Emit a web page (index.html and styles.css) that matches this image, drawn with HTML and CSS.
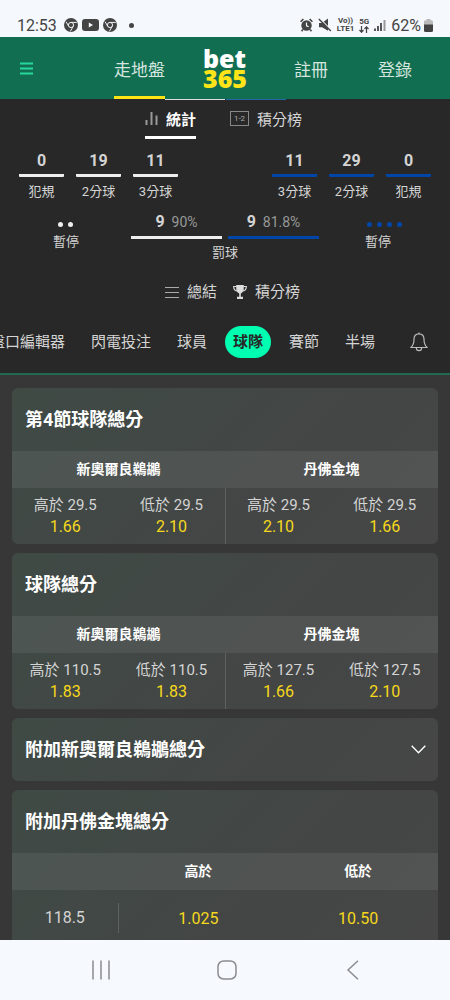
FILE: index.html
```
<!DOCTYPE html>
<html lang="zh-Hant">
<head>
    <meta charset="UTF-8">
    <meta name="viewport" content="width=device-width, initial-scale=1.0">
    <title>bet365</title>
    <link rel="stylesheet" href="styles.css">
</head>
<body>
    <div class="status-bar">
        <span class="clock">12:53</span>
        <svg width="14" height="14" viewBox="0 0 14 14"><circle cx="7" cy="7" r="7" fill="#444"/><circle cx="7" cy="7" r="2.6" fill="none" stroke="#eef1f6" stroke-width="1"/><path d="M7 4.4h5.8M4.8 8.4L2 3.6M9.2 8.4L6.3 13.4" stroke="#eef1f6" stroke-width="1" fill="none"/></svg>
        <svg width="17" height="12" viewBox="0 0 17 12"><rect width="17" height="12" rx="3" fill="#444"/><path d="M6.8 3.6v4.8L11 6z" fill="#f5f8fd"/></svg>
        <svg width="14" height="14" viewBox="0 0 14 14"><circle cx="7" cy="7" r="7" fill="#444"/><circle cx="7" cy="7" r="2.6" fill="none" stroke="#eef1f6" stroke-width="1"/><path d="M7 4.4h5.8M4.8 8.4L2 3.6M9.2 8.4L6.3 13.4" stroke="#eef1f6" stroke-width="1" fill="none"/></svg>
        <span class="more-dot"></span>
        <div class="status-right">
            <svg width="13" height="14" viewBox="0 0 13 14"><circle cx="6.5" cy="7.5" r="5.2" fill="#444"/><path d="M6.5 4.4v3.4l2.2 1" fill="none" stroke="#f5f8fd" stroke-width="1.2"/><path d="M.6 3.8L3.4 1M12.4 3.8L9.600 1M2.800 11.600l-1.200 1.600M10.200 11.600l1.200 1.600" stroke="#444" stroke-width="1.6"/></svg>
            <svg width="14" height="14" viewBox="0 0 14 14"><path d="M1 5h3l6-4.4v12.2L4 9.200H1z" fill="#444"/><path d="M1.600 .4l12 12" stroke="#f5f8fd" stroke-width="1.300"/><path d="M.8 1l12 12" stroke="#444" stroke-width="1.4"/></svg>
            <span class="net"><span>Vo))</span><span>LTE1</span></span>
            <span class="net"><span>5G</span><svg width="10" height="7" viewBox="0 0 10 7"><path d="M2.500 0v6M.5 4l2 2.2L4.500 4M7.500 7V1M5.500 3l2-2.200L9.500 3" fill="none" stroke="#444" stroke-width="1.200"/></svg></span>
            <svg width="12" height="12" viewBox="0 0 12 12"><path d="M1 12V9.500M4 12V7M7 12V4" stroke="#555" stroke-width="2"/><path d="M10.500 12V1" stroke="#999" stroke-width="2"/></svg>
            <div class="battery">
                62%
                <svg width="9" height="13" viewBox="0 0 9 13"><path d="M2.500 0h4v1.300h1A1.500 1.500 0 0 1 9 2.800V6H0V2.800a1.500 1.500 0 0 1 1.500-1.500h1z" fill="#bbb"/><path d="M0 5.500h9v6A1.500 1.500 0 0 1 7.500 13h-6A1.500 1.500 0 0 1 0 11.500z" fill="#444"/></svg>
            </div>
        </div>
    </div>

    <header class="header">
        <button class="menu-btn" aria-label="選單">
            <svg width="13" height="13" viewBox="0 0 13 13"><path d="M0 1.500h13M0 6.500h13M0 11.500h13" stroke="#26d79b" stroke-width="2"/></svg>
        </button>
        <a class="header-link active" href="#">走地盤</a>
        <a class="logo" href="#"><span>bet</span><span class="logo-num">365</span></a>
        <a class="header-link" href="#">註冊</a>
        <a class="header-link" href="#">登錄</a>
    </header>

    <section class="stats">
        <div class="team-strip"><i></i><i class="away"></i></div>
        <nav class="stats-tabs">
            <a class="stats-tab active" href="#">
                <svg width="13" height="13" viewBox="0 0 13 13"><path d="M1.500 8v5M6.500 0v13M11.500 3.500V13" stroke="#999" stroke-width="2"/></svg>
                統計
            </a>
            <a class="stats-tab" href="#">
                <span class="score-icon">1-2</span>
                積分榜
            </a>
        </nav>
        <div class="stat-row">
            <div class="stat"><b>0</b><span>犯規</span></div>
            <div class="stat"><b>19</b><span>2分球</span></div>
            <div class="stat"><b>11</b><span>3分球</span></div>
            <div class="stat away first"><b>11</b><span>3分球</span></div>
            <div class="stat away"><b>29</b><span>2分球</span></div>
            <div class="stat away"><b>0</b><span>犯規</span></div>
        </div>
        <div class="foul-row">
            <div class="timeout">
                <div class="dots"><i></i><i></i></div>
                暫停
            </div>
            <div class="free-throw">
                <div class="bars">
                    <div class="bar"><b>9</b><span>90%</span></div>
                    <div class="bar away"><b>9</b><span>81.8%</span></div>
                </div>
                罰球
            </div>
            <div class="timeout away">
                <div class="dots"><i></i><i></i><i></i><i></i></div>
                暫停
            </div>
        </div>
        <nav class="summary-links">
            <a href="#">
                <svg width="14" height="13" viewBox="0 0 14 13"><path d="M0 1.500h14M0 6.500h14M0 11.500h14" stroke="#aaa"/></svg>
                總結
            </a>
            <a href="#">
                <svg width="14" height="14" viewBox="0 0 14 14"><path d="M3.200 0h7.600v3.500c0 2.800-1.300 4.300-3 5v3.300h2.200V14H4v-2.200h2.200V8.500c-1.700-.7-3-2.200-3-5z" fill="#ddd"/><path d="M3.500 1.500H.7c0 2.600 1 4 3.300 4.500M10.500 1.500h2.800c0 2.600-1 4-3.300 4.500" fill="none" stroke="#ddd" stroke-width="1.200"/></svg>
                積分榜
            </a>
        </nav>
    </section>

    <div class="market-nav">
        <nav class="market-tabs">
            <a href="#">盤口編輯器</a>
            <a href="#">閃電投注</a>
            <a href="#">球員</a>
            <a class="active" href="#">球隊</a>
            <a href="#">賽節</a>
            <a href="#">半場</a>
        </nav>
        <button class="bell-btn" aria-label="通知">
            <svg width="18" height="20" viewBox="0 0 18 20"><path d="M9 1.800c-3.400 0-5 2.500-5 5.400 0 4.500-1.200 6.600-3.200 8.300h16.400c-2-1.700-3.200-3.800-3.200-8.300 0-2.900-1.600-5.400-5-5.400zM9 1.800V.5M6.300 15.700c0 1.900 1.200 2.900 2.700 2.900s2.700-1 2.700-2.900" fill="none" stroke="#bbb" stroke-width="1.200" stroke-linejoin="round"/></svg>
        </button>
    </div>

    <main class="markets">
        <section class="card">
            <h2>第4節球隊總分</h2>
            <table class="teams">
                <thead>
                    <tr><th colspan="2">新奧爾良鵜鶘</th><th colspan="2">丹佛金塊</th></tr>
                </thead>
                <tbody>
                    <tr>
                        <td>高於 29.5<b>1.66</b></td>
                        <td>低於 29.5<b>2.10</b></td>
                        <td>高於 29.5<b>2.10</b></td>
                        <td>低於 29.5<b>1.66</b></td>
                    </tr>
                </tbody>
            </table>
        </section>

        <section class="card">
            <h2>球隊總分</h2>
            <table class="teams">
                <thead>
                    <tr><th colspan="2">新奧爾良鵜鶘</th><th colspan="2">丹佛金塊</th></tr>
                </thead>
                <tbody>
                    <tr>
                        <td>高於 110.5<b>1.83</b></td>
                        <td>低於 110.5<b>1.83</b></td>
                        <td>高於 127.5<b>1.66</b></td>
                        <td>低於 127.5<b>2.10</b></td>
                    </tr>
                </tbody>
            </table>
        </section>

        <section class="card closed">
            <h2>附加新奧爾良鵜鶘總分</h2>
            <svg width="15" height="9" viewBox="0 0 15 9"><path d="M.7.8l6.800 7 6.800-7" fill="none" stroke="#fff" stroke-width="1.400"/></svg>
        </section>

        <section class="card">
            <h2>附加丹佛金塊總分</h2>
            <table class="lines">
                <thead>
                    <tr><th class="line-col"></th><th>高於</th><th>低於</th></tr>
                </thead>
                <tbody>
                    <tr><td class="line-col"><span>118.5</span></td><td><b>1.025</b></td><td><b>10.50</b></td></tr>
                </tbody>
            </table>
        </section>
    </main>

    <div class="system-nav">
        <button aria-label="最近使用"><svg width="20" height="20" viewBox="0 0 20 20"><path d="M2 .5v19M10 .5v19M18 .5v19" stroke="#8a8c90" stroke-width="1.500"/></svg></button>
        <button aria-label="首頁"><svg width="20" height="20" viewBox="0 0 20 20"><rect x="1" y="1" width="18" height="18" rx="5.500" fill="none" stroke="#8a8c90" stroke-width="1.500"/></svg></button>
        <button aria-label="返回"><svg width="20" height="20" viewBox="0 0 20 20"><path d="M15 .8L5 10l10 9.200" fill="none" stroke="#8a8c90" stroke-width="1.500"/></svg></button>
    </div>
</body>
</html>
```
FILE: styles.css
```
* {
    box-sizing: border-box;
}
body {
    display: flex;
    flex-direction: column;
    height: 100vh;
    margin: 0;
    overflow: hidden;
    background-color: #373737;
    color: #d4d4d4;
    font-family: Roboto, "Noto Sans CJK TC", sans-serif;
    font-size: 15px;
}
a {
    color: inherit;
    text-decoration: none;
}
button {
    display: flex;
    align-items: center;
    justify-content: center;
    padding: 0;
    border: none;
    background: none;
    cursor: pointer;
}
svg {
    flex: none;
}

/* phone status bar */
.status-bar {
    display: flex;
    flex: none;
    align-items: center;
    gap: 4px;
    height: 37px;
    padding: 13px 17px 0 17px;
    background-color: #f5f8fd;
    color: #444;
}
.clock {
    margin-right: 3px;
    font-size: 16px;
}
.more-dot {
    width: 5px;
    height: 5px;
    margin-left: 8px;
    border-radius: 50%;
    background-color: #444;
}
.status-right {
    display: flex;
    align-items: center;
    gap: 5px;
    margin-left: auto;
}
.net {
    display: flex;
    flex-direction: column;
    align-items: center;
    font-size: 8px;
    font-weight: 700;
    line-height: 8px;
}
.battery {
    display: flex;
    align-items: center;
    gap: 3px;
    font-size: 16px;
}

/* header */
.header {
    display: flex;
    flex: none;
    align-items: center;
    height: 62px;
    padding: 0 38px 0 20px;
    background-color: #126e51;
    font-size: 17px;
}
.header-link {
    display: flex;
    align-items: center;
    height: 100%;
    padding-top: 3px;
    color: #d5e6df;
    border-bottom: 3px solid transparent;
}
.header-link.active {
    margin-left: auto;
    border-bottom-color: #ffe418;
}
.header-link:last-child {
    margin-left: 50px;
}
.logo {
    margin: 0 47px 0 38px;
    color: #fff;
    font-family: "Open Sans", "Noto Sans", sans-serif;
    font-size: 25px;
    font-weight: 800;
    line-height: 20px;
}
.logo span {
    display: block;
}
.logo-num {
    color: #ffe418;
}

/* match stats */
.stats {
    flex: none;
    background-color: #282828;
}
.team-strip {
    display: flex;
    justify-content: center;
    gap: 1px;
    height: 2px;
}
.team-strip i {
    width: 60px;
    height: 1px;
    background-color: #ddd;
}
.team-strip .away {
    background-color: #2466a8;
}
.stats-tabs {
    display: flex;
    justify-content: center;
    gap: 34px;
    height: 38px;
    padding-right: 3px;
}
.stats-tab {
    display: flex;
    align-items: center;
    gap: 8px;
    border-bottom: 3px solid transparent;
}
.stats-tab.active {
    border-bottom-color: #fff;
    color: #fff;
    font-weight: 700;
}
.score-icon {
    width: 19px;
    border: 1px solid #888;
    color: #aaa;
    font-size: 8px;
    line-height: 13px;
    text-align: center;
}
.stat-row {
    display: flex;
    gap: 12px;
    padding: 11px 19px 0 19px;
}
.stat {
    width: 45px;
    text-align: center;
}
.stat.first {
    margin-left: auto;
}
.stat b {
    display: block;
    height: 27px;
    border-bottom: 3px solid #eee;
    border-radius: 1px;
    font-size: 16px;
    line-height: 21px;
}
.stat span {
    display: block;
    padding-top: 5px;
    font-size: 13px;
    line-height: 20px;
}
.stat.away b {
    border-color: #0046a8;
}
.foul-row {
    display: flex;
    justify-content: space-between;
    padding: 10px 53px 0 53px;
    font-size: 13px;
    line-height: 20px;
}
.timeout {
    width: 32px;
    padding-top: 10px;
}
.dots {
    display: flex;
    gap: 5px;
    padding: 0 5px 5px 5px;
}
.dots i {
    flex: none;
    width: 5px;
    height: 5px;
    border-radius: 50%;
    background-color: #eee;
}
.timeout.away .dots {
    padding-left: 2px;
}
.away .dots i {
    background-color: #0046a8;
}
.free-throw {
    width: 188px;
    text-align: center;
}
.bars {
    display: flex;
    gap: 6px;
    padding-bottom: 4px;
}
.bar {
    display: flex;
    flex: 1;
    align-items: center;
    justify-content: center;
    gap: 7px;
    height: 27px;
    padding-bottom: 5px;
    border-bottom: 3px solid #eee;
}
.bar.away {
    border-color: #0046a8;
}
.bar b {
    font-size: 16px;
}
.bar span {
    color: #999;
    font-size: 14px;
}
.summary-links {
    display: flex;
    justify-content: center;
    gap: 16px;
    padding: 18px 0 6px 15px;
    line-height: 22px;
}
.summary-links a {
    display: flex;
    align-items: center;
    gap: 8px;
}

/* market tabs */
.market-nav {
    display: flex;
    flex: none;
    align-items: center;
    height: 66px;
    padding-top: 2px;
    border-bottom: 2px solid #1f6a50;
    background-color: #282828;
}
.market-tabs {
    display: flex;
    flex: 1;
    justify-content: flex-end;
    gap: 10px;
    min-width: 0;
    overflow: hidden;
}
.market-tabs a {
    flex: none;
    padding: 0 8px;
    border-radius: 16px;
    line-height: 32px;
}
.market-tabs a.active {
    background-color: #00ffb0;
    color: #282828;
    font-weight: 700;
}
.bell-btn {
    width: 18px;
    margin: 0 22px 0 27px;
}

/* market cards */
.markets {
    display: flex;
    flex: 1;
    flex-direction: column;
    gap: 9px;
    min-height: 0;
    padding: 13px 12px 0 12px;
    overflow: hidden;
}
.card {
    flex: none;
    border-radius: 6px;
    background-image: linear-gradient(135deg, #3f4a45, #434645 60%, #464646);
    overflow: hidden;
}
.card h2 {
    margin: 0;
    padding-left: 13px;
    color: #fff;
    font-size: 18px;
    line-height: 63px;
}
.card.closed {
    display: flex;
    align-items: center;
    justify-content: space-between;
    padding-right: 12px;
}
.card table {
    width: 100%;
    border-collapse: collapse;
    table-layout: fixed;
    text-align: center;
}
.card th {
    height: 37px;
    padding: 0 0 4px 0;
    background-color: rgba(255, 255, 255, 0.07);
    color: #fff;
    font-size: 14px;
}
.card td {
    height: 56px;
    padding: 0;
    line-height: 21px;
}
.card td b {
    display: block;
    color: #f5d81b;
    font-size: 16px;
    font-weight: 400;
}
.teams td:nth-child(3) {
    border-left: 1px solid #5e6261;
}
.card .line-col {
    width: 25%;
}
.line-col span {
    display: block;
    border-right: 1px solid #5e6261;
    font-size: 16px;
    line-height: 30px;
}

/* android navigation */
.system-nav {
    display: flex;
    flex: none;
    height: 60px;
    padding: 0 34px 0 38px;
    background-color: #f6f9fe;
}
.system-nav button {
    flex: 1;
}
```
